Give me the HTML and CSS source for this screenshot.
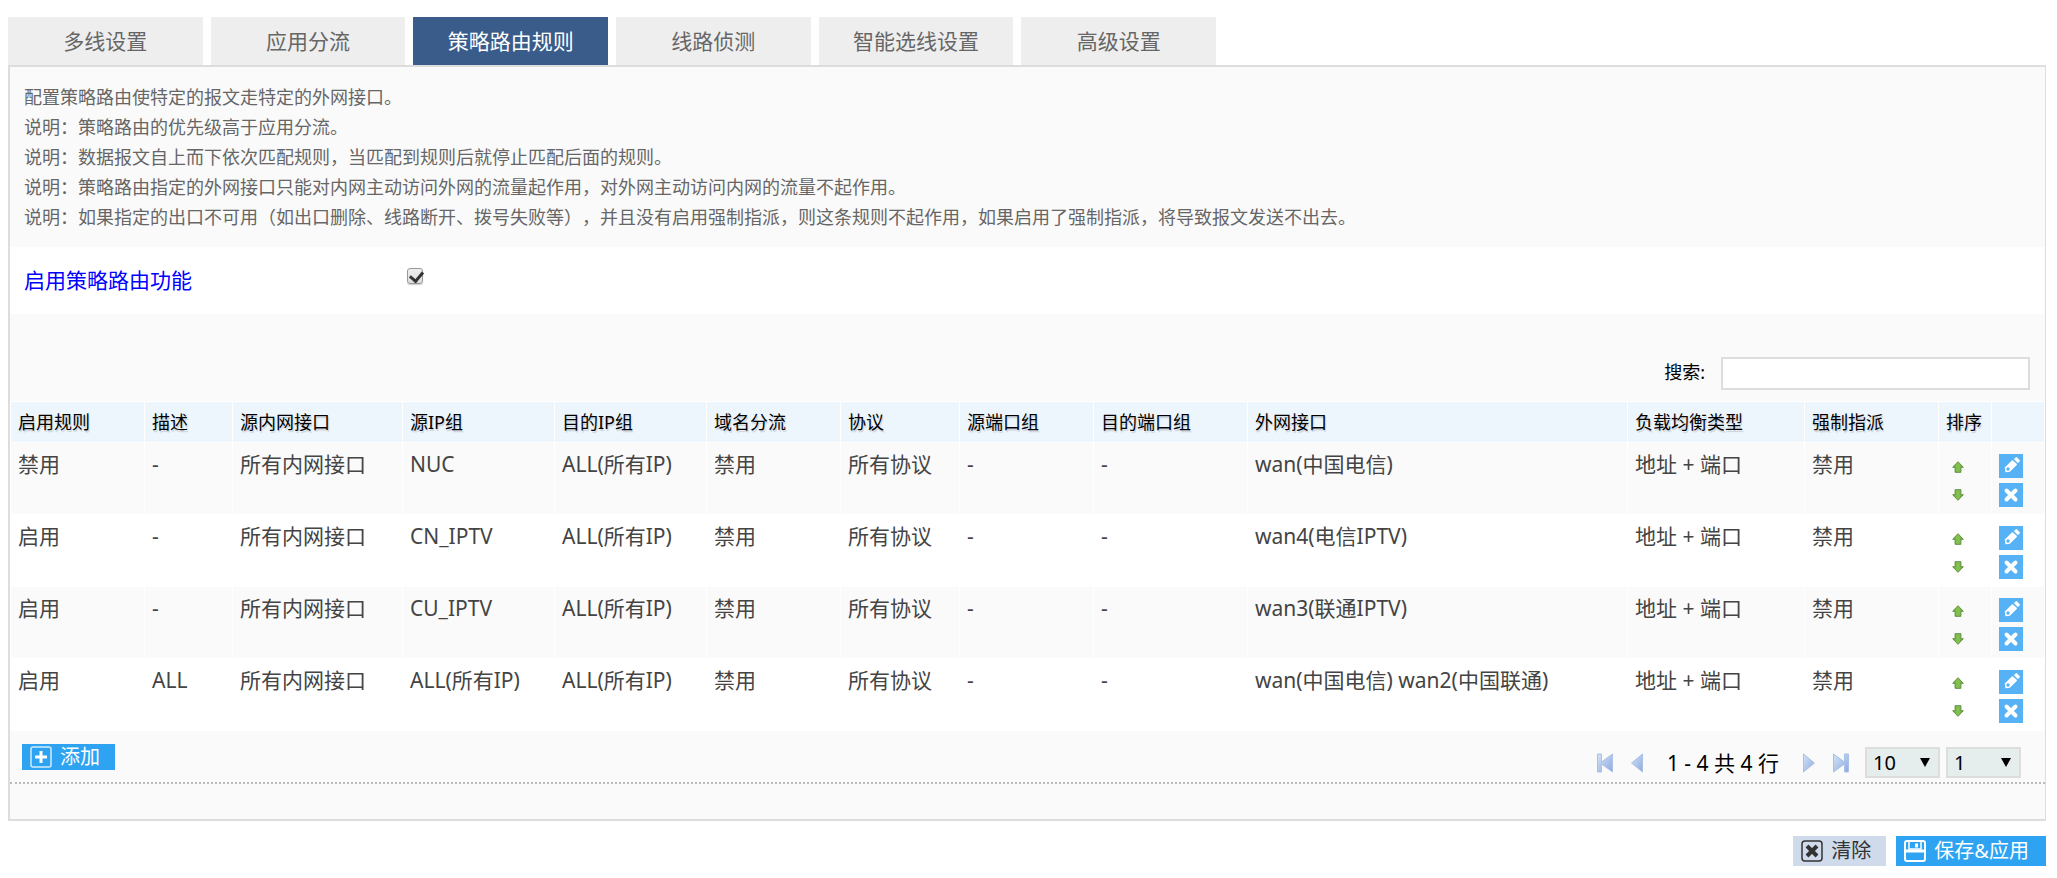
FILE: index.html
```html
<!DOCTYPE html>
<html lang="zh-CN">
<head>
    <meta charset="UTF-8">
    <meta name="viewport" content="width=device-width, initial-scale=1.0">
    <title>策略路由规则</title>
    <link rel="stylesheet" href="styles.css">
</head>
<body>
    <!-- 图标 -->
    <svg class="sprite" aria-hidden="true">
        <defs>
            <linearGradient id="green" x1="0" y1="0" x2="1" y2="0">
                <stop offset="0" stop-color="#6fa546"/>
                <stop offset="0.5" stop-color="#86c450"/>
                <stop offset="1" stop-color="#6fa546"/>
            </linearGradient>
            <linearGradient id="blue" x1="0" y1="0" x2="1" y2="1">
                <stop offset="0" stop-color="#d3e4f8"/>
                <stop offset="1" stop-color="#8fa9dc"/>
            </linearGradient>
        </defs>
        <symbol id="i-up" viewBox="0 0 12 12">
            <path d="M6 .7 11.3 6.3H8.9v5H3.1v-5H.7z" fill="url(#green)" stroke="#5f9140" stroke-linejoin="round"/>
        </symbol>
        <symbol id="i-down" viewBox="0 0 12 12">
            <path d="M6 11.3 11.3 5.7H8.9v-5H3.1v5H.7z" fill="url(#green)" stroke="#5f9140" stroke-linejoin="round"/>
        </symbol>
        <symbol id="i-edit" viewBox="0 0 24 24">
            <path d="M13.4 7 17.2 10.4 10.6 17 7 17.6 6.6 13.8z" fill="#fff" stroke="#fff" stroke-width="1.5" stroke-linejoin="round"/>
            <path d="M15.4 5 17.6 3.4 20.8 6.8 18.8 8.6z" fill="#fff" stroke="#fff" stroke-linejoin="round"/>
            <circle cx="9" cy="15" r="1.7" fill="#56b2f5"/>
        </symbol>
        <symbol id="i-del" viewBox="0 0 24 24">
            <path d="M7.5 7.5 16.5 16.5M16.5 7.5 7.5 16.5" stroke="#fff" stroke-width="4" stroke-linecap="round"/>
        </symbol>
        <symbol id="i-first" viewBox="0 0 16 20">
            <path d="M.5 1h4v8L15.5 1v18L4.5 11v8h-4z" fill="url(#blue)" stroke="#a9c0e8"/>
        </symbol>
        <symbol id="i-last" viewBox="0 0 16 20">
            <path d="M15.5 1h-4v8L.5 1v18l11-8v8h4z" fill="url(#blue)" stroke="#a9c0e8"/>
        </symbol>
        <symbol id="i-prev" viewBox="0 0 12 20">
            <path d="M11.5 1v18L.5 10z" fill="url(#blue)" stroke="#a9c0e8"/>
        </symbol>
        <symbol id="i-next" viewBox="0 0 12 20">
            <path d="M.5 1v18l11-9z" fill="url(#blue)" stroke="#a9c0e8"/>
        </symbol>
        <symbol id="i-add" viewBox="0 0 22 22">
            <rect x="1" y="1" width="20" height="20" rx="2" fill="none" stroke="#d3ebfc" stroke-width="1.5"/>
            <path d="M11 5v12M5 11h12" stroke="#fff" stroke-width="3"/>
        </symbol>
        <symbol id="i-clear" viewBox="0 0 22 22">
            <rect x="1" y="1" width="20" height="20" rx="3" fill="none" stroke="#333" stroke-width="1.5"/>
            <path d="M6 6l10 10M16 6l-10 10" stroke="#333" stroke-width="4"/>
        </symbol>
        <symbol id="i-save" viewBox="0 0 22 22">
            <rect x="1" y="1" width="20" height="20" rx="2" fill="none" stroke="#fff" stroke-width="2"/>
            <path d="M5 1v8h12V1" fill="none" stroke="#fff" stroke-width="1.5"/>
            <path d="M1 11h20" stroke="#fff" stroke-width="3"/>
            <path d="M12.5 3.5v4" stroke="#fff" stroke-width="3"/>
        </symbol>
    </svg>

    <nav class="tabs">
        <a href="#">多线设置</a>
        <a href="#">应用分流</a>
        <a href="#" class="active">策略路由规则</a>
        <a href="#">线路侦测</a>
        <a href="#">智能选线设置</a>
        <a href="#">高级设置</a>
    </nav>

    <div class="panel">
        <div class="intro">
            <p>配置策略路由使特定的报文走特定的外网接口。</p>
            <p>说明：策略路由的优先级高于应用分流。</p>
            <p>说明：数据报文自上而下依次匹配规则，当匹配到规则后就停止匹配后面的规则。</p>
            <p>说明：策略路由指定的外网接口只能对内网主动访问外网的流量起作用，对外网主动访问内网的流量不起作用。</p>
            <p>说明：如果指定的出口不可用（如出口删除、线路断开、拨号失败等），并且没有启用强制指派，则这条规则不起作用，如果启用了强制指派，将导致报文发送不出去。</p>
        </div>

        <div class="option">
            <label for="enable">启用策略路由功能</label>
            <input type="checkbox" id="enable" checked>
        </div>

        <div class="search">
            <label for="search">搜索:</label>
            <input type="text" id="search">
        </div>

        <table>
            <colgroup>
                <col class="c-mid"><col class="c-desc"><col class="c-lan"><col class="c-ip"><col class="c-ip">
                <col class="c-mid"><col class="c-proto"><col class="c-mid"><col class="c-port"><col>
                <col class="c-type"><col class="c-mid"><col class="c-icon"><col class="c-icon">
            </colgroup>
            <thead>
                <tr>
                    <th>启用规则</th><th>描述</th><th>源内网接口</th><th>源IP组</th><th>目的IP组</th>
                    <th>域名分流</th><th>协议</th><th>源端口组</th><th>目的端口组</th><th>外网接口</th>
                    <th>负载均衡类型</th><th>强制指派</th><th>排序</th><th></th>
                </tr>
            </thead>
            <tbody id="rules"></tbody>
        </table>

        <div class="table-foot">
            <button class="btn btn-add"><svg><use href="#i-add"/></svg>添加</button>
            <div class="pager">
                <button aria-label="首页"><svg class="wide"><use href="#i-first"/></svg></button>
                <button aria-label="上一页"><svg><use href="#i-prev"/></svg></button>
                <span>1 - 4 共 4 行</span>
                <button aria-label="下一页"><svg><use href="#i-next"/></svg></button>
                <button aria-label="末页"><svg class="wide"><use href="#i-last"/></svg></button>
                <div class="selects">
                    <div class="select">
                        <select aria-label="每页行数"><option>10</option><option>20</option></select>
                    </div>
                    <div class="select">
                        <select aria-label="页码"><option>1</option></select>
                    </div>
                </div>
            </div>
        </div>
        <div class="panel-end"></div>
    </div>

    <div class="actions">
        <button class="btn btn-clear"><svg><use href="#i-clear"/></svg>清除</button>
        <button class="btn btn-save"><svg><use href="#i-save"/></svg>保存&amp;应用</button>
    </div>

    <script>
        const rules = [
            { on: '禁用', desc: '-', src: 'NUC', wan: 'wan(中国电信)' },
            { on: '启用', desc: '-', src: 'CN_IPTV', wan: 'wan4(电信IPTV)' },
            { on: '启用', desc: '-', src: 'CU_IPTV', wan: 'wan3(联通IPTV)' },
            { on: '启用', desc: 'ALL', src: 'ALL(所有IP)', wan: 'wan(中国电信) wan2(中国联通)' }
        ];

        function iconButton(icon, label) {
            return `<button aria-label="${label}"><svg><use href="#${icon}"/></svg></button>`;
        }

        document.getElementById('rules').innerHTML = rules.map(r => {
            const cells = [r.on, r.desc, '所有内网接口', r.src, 'ALL(所有IP)', '禁用', '所有协议',
                '-', '-', r.wan, '地址 + 端口', '禁用'];
            return `<tr>${cells.map(c => `<td>${c}</td>`).join('')}
                <td class="sort">${iconButton('i-up', '上移')}${iconButton('i-down', '下移')}</td>
                <td class="ops">${iconButton('i-edit', '编辑')}${iconButton('i-del', '删除')}</td></tr>`;
        }).join('');
    </script>
</body>
</html>
```

FILE: styles.css
```css
:root {
    --line: #ddd;
    --panel: #fafafa;
    --primary: #2ea3f2;
}

* {
    box-sizing: border-box;
}

body {
    margin: 17px 11px 12px 8px;
    background: #fff;
    color: #000;
    font-family: "Noto Sans", "Noto Sans CJK SC", sans-serif;
    font-size: 18px;
    line-height: 30px;
    text-spacing-trim: space-all;
}

button, input, select {
    font-family: inherit;
}

button {
    border: none;
    padding: 0;
    background: none;
    cursor: pointer;
}

svg {
    display: block;
}

.sprite {
    position: absolute;
    width: 0;
    height: 0;
}

/* 标签页 */
.tabs {
    display: grid;
    grid-template-columns: repeat(6, 1fr);
    gap: 8px;
    max-width: 1208px;
}

.tabs a {
    height: 48px;
    line-height: 48px;
    background: #eee;
    color: #666;
    font-size: 21px;
    text-align: center;
    text-decoration: none;
}

.tabs a.active {
    background: #395c8b;
    color: #fff;
}

.panel {
    border: 2px solid var(--line);
    border-right-width: 1px;
    background: var(--panel);
}

.intro {
    padding: 15px 14px;
    color: #666;
}

.intro p {
    margin: 0;
}

.option {
    display: flex;
    height: 67px;
    padding: 18px 14px;
    background: #fff;
}

.option label {
    width: 383px;
    color: #00f;
    font-size: 21px;
}

.option input {
    appearance: none;
    width: 16px;
    height: 16px;
    margin: 3px 0;
    border: 1px solid #999;
    border-radius: 3px;
    background: linear-gradient(#eee, #ddd);
    box-shadow: 0 1px 1px rgba(0, 0, 0, 0.2);
}

.option input:checked::before {
    content: "";
    display: block;
    width: 6px;
    height: 10px;
    margin: 0 4px;
    border: solid #333;
    border-width: 0 3px 3px 0;
    transform: rotate(40deg);
}

.search {
    display: flex;
    justify-content: flex-end;
    gap: 16px;
    padding: 43px 15px 11px;
}

.search input {
    width: 309px;
    height: 33px;
    border: 2px solid var(--line);
    background: #fff;
}

/* 规则表 */
table {
    width: 100%;
    table-layout: fixed;
    border-collapse: collapse;
}

.c-mid { width: 134px; }
.c-desc { width: 88px; }
.c-lan { width: 170px; }
.c-ip { width: 152px; }
.c-proto { width: 119px; }
.c-port { width: 154px; }
.c-type { width: 177px; }
.c-icon { width: 53px; }

th, td {
    border: 1px solid #fff;
    padding: 0 7px;
    text-align: left;
    white-space: nowrap;
}

th {
    height: 41px;
    background: #eef6fd;
    font-weight: normal;
    text-shadow: 1px 2px 1px rgba(0, 0, 0, 0.15);
}

td {
    height: 72px;
    padding-top: 6px;
    color: #444;
    font-size: 21px;
    vertical-align: top;
}

tbody tr:nth-child(even) {
    background: #fff;
}

td button {
    display: block;
}

.sort {
    padding: 18px 13px 0;
}

.sort svg {
    width: 12px;
    height: 12px;
}

.sort button + button {
    margin-top: 16px;
}

.ops {
    padding-top: 11px;
}

.ops svg {
    width: 24px;
    height: 24px;
    background: #56b2f5;
}

.ops button + button {
    margin-top: 5px;
}

.table-foot {
    display: flex;
    justify-content: space-between;
    align-items: flex-start;
    padding: 13px 24px 4px 12px;
    border-bottom: 2px dotted #bbb;
}

.btn {
    display: flex;
    align-items: center;
    gap: 8px;
    height: 30px;
    padding: 0 15px 0 8px;
    background: var(--primary);
    color: #fff;
    font-size: 20px;
    line-height: 30px;
}

.btn svg {
    width: 22px;
    height: 22px;
}

.btn-add {
    height: 26px;
    line-height: 26px;
}

.btn-clear {
    background: #cfdaeb;
    color: #333;
}

.btn-save {
    padding-right: 17px;
}

.pager {
    display: flex;
    align-items: center;
    gap: 14px;
    padding-top: 3px;
    font-size: 21px;
}

.pager button {
    padding: 0 2px;
}

.pager svg {
    width: 12px;
    height: 20px;
}

.pager svg.wide {
    width: 16px;
}

.pager span {
    padding: 0 8px;
}

.selects {
    display: flex;
    gap: 6px;
}

.select {
    position: relative;
}

.select::after {
    content: "";
    position: absolute;
    top: 11px;
    right: 10px;
    border: solid transparent;
    border-width: 9px 5px 0;
    border-top-color: #000;
    pointer-events: none;
}

.select select {
    display: block;
    appearance: none;
    width: 75px;
    height: 31px;
    padding: 0 6px;
    border: 2px solid var(--line);
    border-radius: 0;
    background: #e6eeed;
    color: #000;
    font-size: 20px;
}

.panel-end {
    height: 35px;
}

.actions {
    display: flex;
    justify-content: flex-end;
    gap: 10px;
    padding-top: 15px;
}
```
